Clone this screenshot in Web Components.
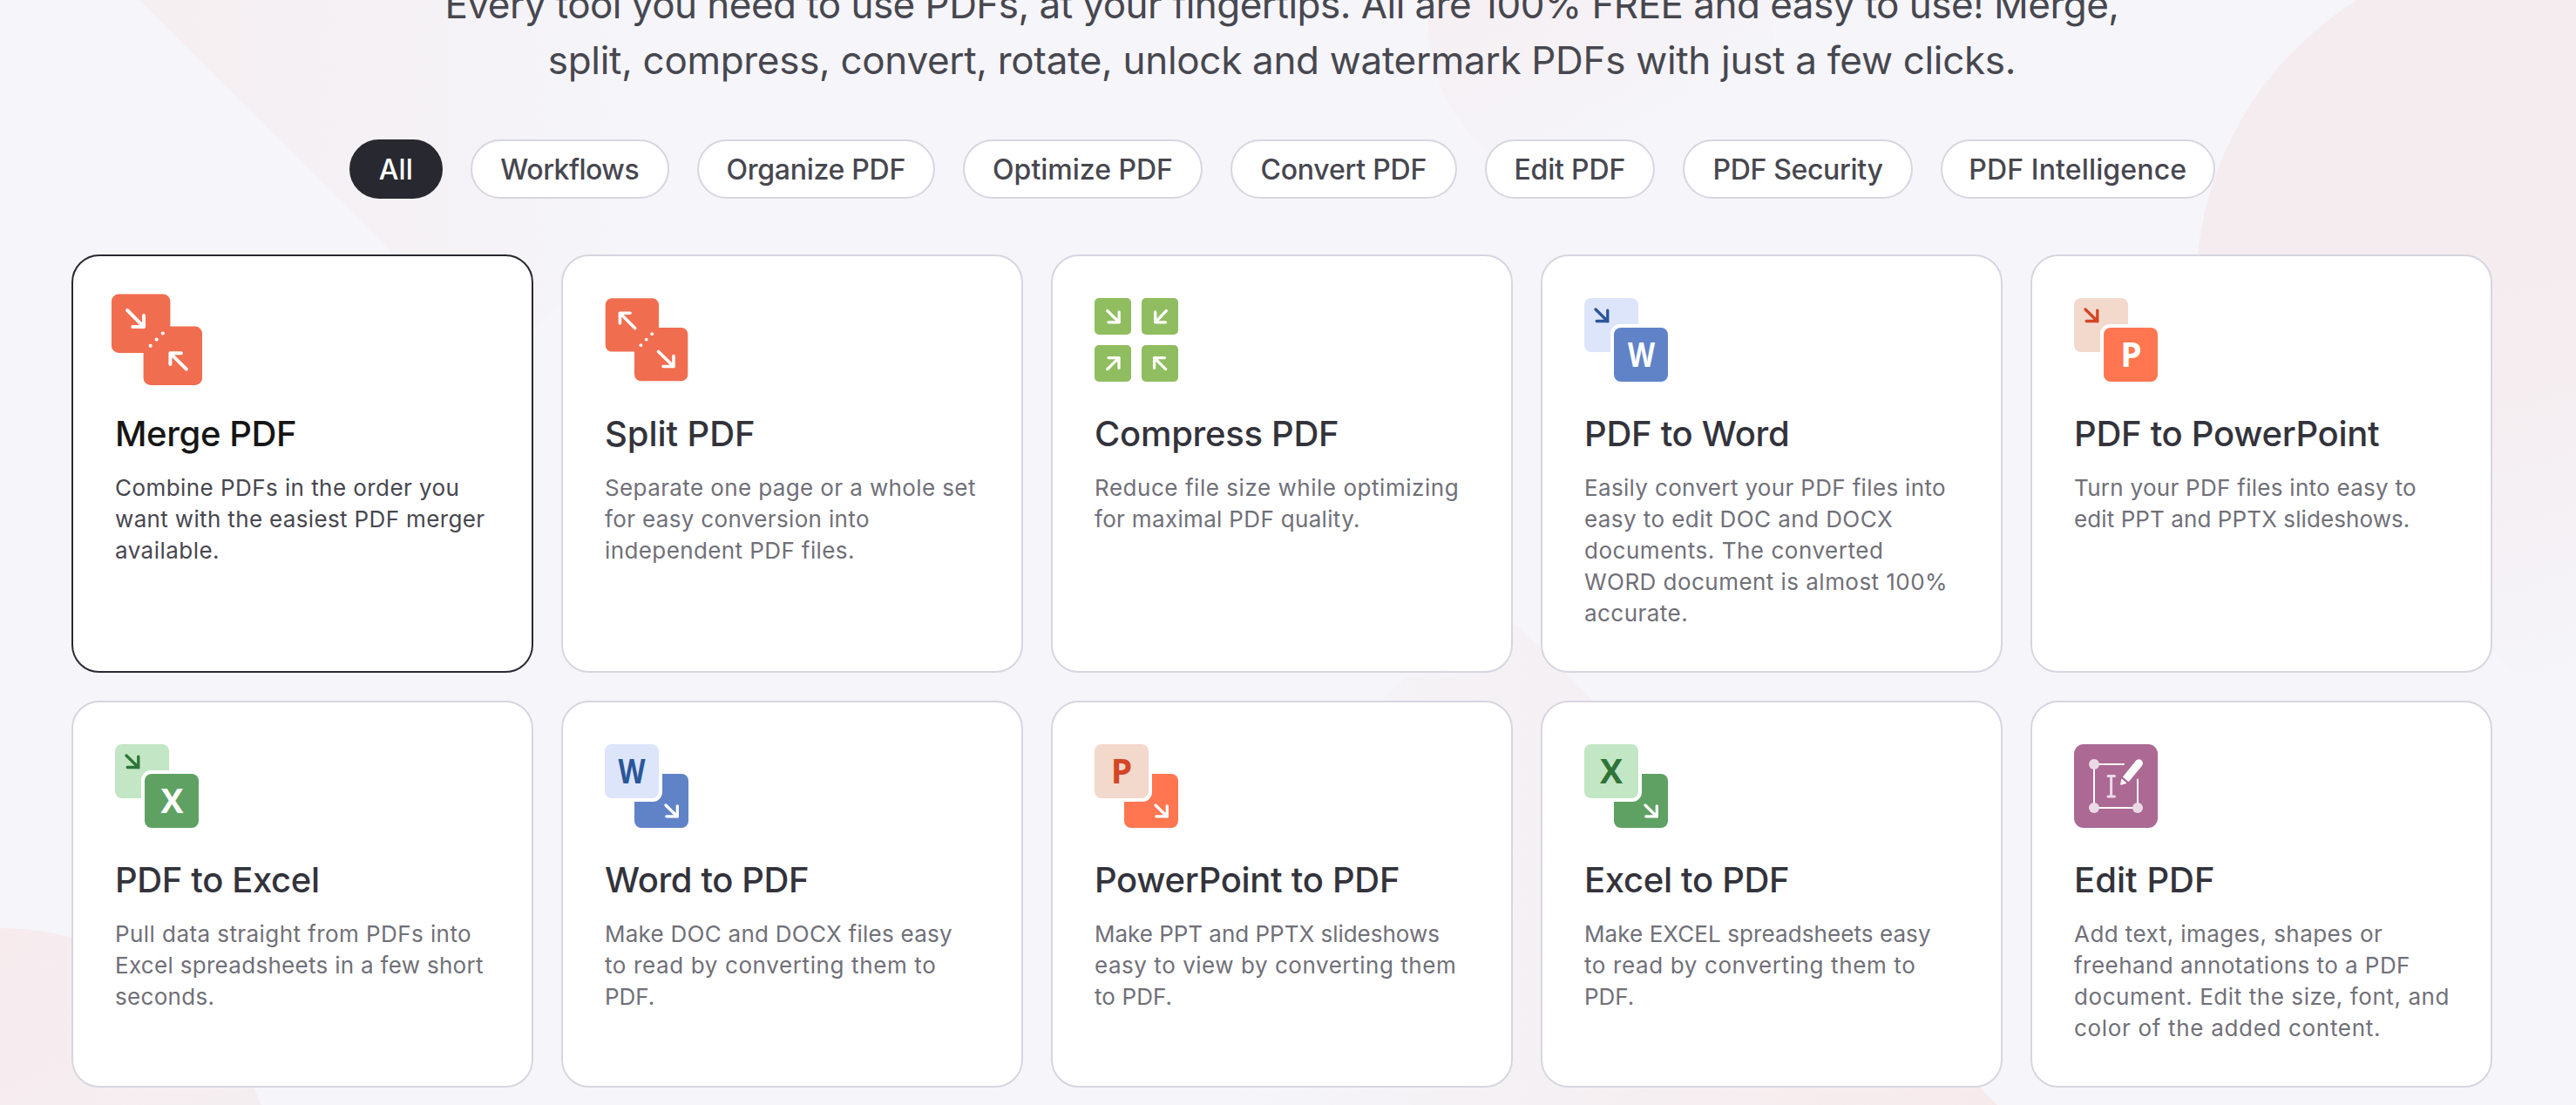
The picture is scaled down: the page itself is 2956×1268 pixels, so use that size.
<!DOCTYPE html>
<html lang="en">
<head>
<meta charset="utf-8">
<title>PDF tools</title>
<style>
    :root {
        --font-main: Inter, "Liberation Sans", sans-serif;
        --color-bg: #f5f5fa;
        --color-border: #d6d6e0;
        --color-title: #33333b;
        --color-text: #707078;
        --color-text-strong: #47474f;
        --color-dark: #282930;
    }
    body {
        margin: 0;
        height: 1268px;
        overflow: hidden;
        background: var(--color-bg);
        font-family: var(--font-main);
    }
</style>
</head>
<body>
<pdf-home></pdf-home>

<script>
// Texts are kept line by line: [text, letter-spacing in px]
const SUBTITLE = [
    ['Every tool you need to use PDFs, at your fingertips. All are 100% FREE and easy to use! Merge,', -0.53],
    ['split, compress, convert, rotate, unlock and watermark PDFs with just a few clicks.', -0.31]
];

const FILTERS = [
    { label: 'All', width: 107.5, spacing: 0.13, active: true },
    { label: 'Workflows', width: 227.5, spacing: -0.51 },
    { label: 'Organize PDF', width: 273.5, spacing: -0.27 },
    { label: 'Optimize PDF', width: 275, spacing: -0.01 },
    { label: 'Convert PDF', width: 259.5, spacing: -0.21 },
    { label: 'Edit PDF', width: 195.5, spacing: -0.17 },
    { label: 'PDF Security', width: 264, spacing: -0.33 },
    { label: 'PDF Intelligence', width: 314.5, spacing: 0.14 }
];

const TOOLS = [
    { icon: 'merge', title: ['Merge PDF', -0.4], active: true, lines: [
        ['Combine PDFs in the order you', 0.44],
        ['want with the easiest PDF merger', 0.35],
        ['available.', 0.46]] },
    { icon: 'split', title: ['Split PDF', -0.07], lines: [
        ['Separate one page or a whole set', 0.39],
        ['for easy conversion into', 0.35],
        ['independent PDF files.', 0.4]] },
    { icon: 'compress', title: ['Compress PDF', -0.29], lines: [
        ['Reduce file size while optimizing', 0.54],
        ['for maximal PDF quality.', 0.33]] },
    { icon: 'pdf-word', title: ['PDF to Word', -0.28], lines: [
        ['Easily convert your PDF files into', 0.34],
        ['easy to edit DOC and DOCX', 0.43],
        ['documents. The converted', 0.53],
        ['WORD document is almost 100%', 0.46],
        ['accurate.', 0.46]] },
    { icon: 'pdf-ppt', title: ['PDF to PowerPoint', -0.28], lines: [
        ['Turn your PDF files into easy to', 0.28],
        ['edit PPT and PPTX slideshows.', 0.09]] },
    { icon: 'pdf-excel', title: ['PDF to Excel', -0.36], lines: [
        ['Pull data straight from PDFs into', 0.43],
        ['Excel spreadsheets in a few short', 0.3],
        ['seconds.', 0.3]] },
    { icon: 'word-pdf', title: ['Word to PDF', -0.39], lines: [
        ['Make DOC and DOCX files easy', 0.26],
        ['to read by converting them to', 0.62],
        ['PDF.', 0]] },
    { icon: 'ppt-pdf', title: ['PowerPoint to PDF', -0.29], lines: [
        ['Make PPT and PPTX slideshows', -0.02],
        ['easy to view by converting them', 0.54],
        ['to PDF.', 0.1]] },
    { icon: 'excel-pdf', title: ['Excel to PDF', -0.31], lines: [
        ['Make EXCEL spreadsheets easy', 0.08],
        ['to read by converting them to', 0.62],
        ['PDF.', 0]] },
    { icon: 'edit', title: ['Edit PDF', 0.04], lines: [
        ['Add text, images, shapes or', 0.44],
        ['freehand annotations to a PDF', 0.46],
        ['document. Edit the size, font, and', 0.58],
        ['color of the added content.', 0.68]] }
];

const OFFICE = {
    word: { letter: 'W', light: '#dde5fa', main: '#6083c8', dark: '#2a5698', size: 31 },
    ppt: { letter: 'P', light: '#f3d8cc', main: '#ff7651', dark: '#d24625', size: 24.5 },
    excel: { letter: 'X', light: '#c3e6c4', main: '#5fa163', dark: '#2f7438', size: 26 }
};

function letter(app, x, y, fill) {
    const { letter, size } = OFFICE[app];
    return `<text x="${x - size / 2}" y="${y}" textLength="${size}" lengthAdjust="spacingAndGlyphs" fill="${fill}">${letter}</text>`;
}

function fromPdf(app) {
    const c = OFFICE[app];
    return `
        <rect width="62" height="62" rx="8" fill="${c.light}"/>
        <path d="M13 13 27 26.8M14.2 26.5H26.8V14.2" fill="none" stroke="${c.dark}" stroke-width="3.3"/>
        <rect x="30" y="30" width="70" height="70" rx="11" fill="#fff"/>
        <rect x="34" y="34" width="62" height="62" rx="8" fill="${c.main}"/>
        ${letter(app, 65.5, 79.3, '#fff')}`;
}

function toPdf(app) {
    const c = OFFICE[app];
    return `
        <rect x="34" y="34" width="62" height="62" rx="8" fill="${c.main}"/>
        <path d="M70 70 83.3 83M70.8 82.8H83.3V71" fill="none" stroke="#fff" stroke-width="3.3"/>
        <rect x="-4" y="-4" width="70" height="70" rx="11" fill="#fff"/>
        <rect width="62" height="62" rx="8" fill="${c.light}"/>
        ${letter(app, 31, 45.2, c.dark)}`;
}

const pages = `
    <rect x=".7" y=".3" width="61.3" height="61.3" rx="7.5" fill="#f06d4f"/>
    <rect x="34" y="34" width="61.3" height="61.3" rx="7.5" fill="#f06d4f"/>
    <g fill="#fff"><circle cx="54.2" cy="41.2" r="1.9"/><circle cx="47.7" cy="47.6" r="1.9"/><circle cx="41.3" cy="54.2" r="1.9"/></g>`;

const ICONS = {
    'merge': `${pages}<path d="M17.2 17.1 34.4 34.4M22.8 34.4H34.4V22.6M78.8 78.6 62 61.9M73.4 61.9H62V73.4" fill="none" stroke="#fff" stroke-width="3.6"/>`,
    'split': `${pages}<path d="M34.6 34.6 17.4 17.3M29 17.3H17.4V29M61.6 61.5 79 78.5M67 78.5H79V66.6" fill="none" stroke="#fff" stroke-width="3.6"/>`,
    'compress': `
        <g fill="#90bd60"><rect width="42" height="42" rx="5"/><rect x="54" width="42" height="42" rx="5"/><rect y="54" width="42" height="42" rx="5"/><rect x="54" y="54" width="42" height="42" rx="5"/></g>
        <path d="M14.8 14.6 28.2 27.8M16 27.8H28.2V16M82.3 14.6 69.7 27.8M81.5 27.8H69.7V16M14.8 81.6 28 68.6M16 68.6H28V80.4M81.6 81.6 68.6 68.6M80.4 68.6H68.6V80.4" fill="none" stroke="#fff" stroke-width="3.3"/>`,
    'pdf-word': fromPdf('word'),
    'pdf-ppt': fromPdf('ppt'),
    'pdf-excel': fromPdf('excel'),
    'word-pdf': toPdf('word'),
    'ppt-pdf': toPdf('ppt'),
    'excel-pdf': toPdf('excel'),
    'edit': `
        <rect width="96" height="96" rx="11" fill="#ab6993"/>
        <path d="M23 23H57M23 23V73H73V40.5" fill="none" stroke="#fff" stroke-width="2" stroke-linecap="butt"/>
        <g fill="#ebdae5"><circle cx="23" cy="23" r="6"/><circle cx="23" cy="73" r="6"/><circle cx="73" cy="73" r="6"/></g>
        <path d="M39 36.5H46.5M39 60H46.5M42.6 36.5V60" fill="none" stroke="#ebdae5" stroke-width="3"/>
        <path d="M55.9 37.6 70.6 19.2A4.6 4.6 0 0 1 78 24.8L62.6 43.2Z" fill="#fff"/>
        <path d="M55 40.4 60 44.6 54 46.2Z" fill="#fff" stroke="#fff" stroke-width="1"/>`
};

// tool-icon.js
class ToolIcon extends HTMLElement {
    constructor() {
        super();
        this.attachShadow({ mode: 'open' });
    }

    connectedCallback() {
        this.shadowRoot.innerHTML = /*html*/`
        <style>
            :host { display: block; width: 96px; height: 96px; }
            svg { display: block; width: 96px; height: 96px; overflow: visible; }
            path { stroke-linecap: round; stroke-linejoin: round; }
            text { font: 700 39px "Open Sans", sans-serif; }
        </style>
        <svg viewBox="0 0 96 96">${ICONS[this.getAttribute('name')] || ''}</svg>`;
    }
}
customElements.define('tool-icon', ToolIcon);

// tool-card.js
class ToolCard extends HTMLElement {
    constructor() {
        super();
        this.attachShadow({ mode: 'open' });
        this.shadowRoot.innerHTML = /*html*/`
        <style>
            :host {
                display: flex;
                flex-direction: column;
                box-sizing: border-box;
                padding: 48px;
                border: 2px solid var(--color-border);
                border-radius: 32px;
                background: #fff;
                color: var(--color-text);
            }
            :host([active]) {
                border-color: var(--color-dark);
                color: var(--color-text-strong);
            }
            :host([active]) ::slotted(tool-icon) { transform: scale(1.1); }
            :host([active]) h3 { color: #161616; }
            h3 {
                margin: 36px 0 20px;
                color: var(--color-title);
                font-size: 40px;
                line-height: 48px;
                font-weight: 500;
                white-space: nowrap;
            }
            p {
                margin: 0;
                font-size: 26px;
                line-height: 36px;
                white-space: nowrap;
            }
        </style>
        <slot name="icon"></slot>
        <h3><slot name="title"></slot></h3>
        <p><slot></slot></p>`;
    }
}
customElements.define('tool-card', ToolCard);

// filter-chip.js
class FilterChip extends HTMLElement {
    constructor() {
        super();
        this.attachShadow({ mode: 'open' });
        this.shadowRoot.innerHTML = /*html*/`
        <style>
            :host {
                display: flex;
                align-items: center;
                justify-content: center;
                box-sizing: border-box;
                height: 68px;
                border: 2px solid var(--color-border);
                border-radius: 34px;
                background: #fff;
                color: var(--color-text-strong);
                font-size: 32px;
                font-weight: 500;
                white-space: nowrap;
            }
            :host([active]) {
                border-color: var(--color-dark);
                background: var(--color-dark);
                color: #fff;
            }
        </style>
        <slot></slot>`;
    }
}
customElements.define('filter-chip', FilterChip);

// page-backdrop.js
class PageBackdrop extends HTMLElement {
    constructor() {
        super();
        this.attachShadow({ mode: 'open' });
        this.shadowRoot.innerHTML = /*html*/`
        <style>
            :host { display: block; position: absolute; inset: 0; z-index: -1; }
            svg { display: block; width: 100%; height: 100%; }
        </style>
        <svg viewBox="0 0 2956 1268" preserveAspectRatio="none">
            <defs>
                <linearGradient id="a" gradientUnits="userSpaceOnUse" x1="180" y1="100" x2="740" y2="100">
                    <stop offset="0" stop-color="#f6eff2"/><stop offset=".4" stop-color="#f5f1f4"/><stop offset="1" stop-color="#f5f5fa"/>
                </linearGradient>
                <linearGradient id="b" gradientUnits="userSpaceOnUse" x1="1690" y1="-80" x2="1830" y2="190">
                    <stop offset="0" stop-color="#f6eef1"/><stop offset="1" stop-color="#f5f5fa"/>
                </linearGradient>
                <linearGradient id="c" gradientUnits="userSpaceOnUse" x1="2760" y1="250" x2="2900" y2="800">
                    <stop offset="0" stop-color="#f5ecef"/><stop offset=".35" stop-color="#f5edf0"/><stop offset="1" stop-color="#f5f5fa"/>
                </linearGradient>
                <linearGradient id="d" gradientUnits="userSpaceOnUse" x1="1420" y1="0" x2="2290" y2="0">
                    <stop offset="0" stop-color="#f5f5fa"/><stop offset=".35" stop-color="#f5f1f4"/><stop offset="1" stop-color="#f7eaec"/>
                </linearGradient>
                <linearGradient id="e" gradientUnits="userSpaceOnUse" x1="0" y1="1065" x2="160" y2="1330">
                    <stop offset="0" stop-color="#f7ebee"/><stop offset="1" stop-color="#f5eef1"/>
                </linearGradient>
            </defs>
            <path d="M160 0 575 415 990 0Z" fill="url(#a)"/>
            <circle cx="1837" cy="25" r="198" fill="url(#b)"/>
            <path d="M2705 0A390 390 0 0 0 2520 331Q2560 560 2800 680L2956 850V0Z" fill="url(#c)"/>
            <path d="M1122 1268 1667 723Q1707 690 1747 723L2292 1268Z" fill="url(#d)"/>
            <circle cx="0" cy="1388" r="323" fill="url(#e)"/>
        </svg>`;
    }
}
customElements.define('page-backdrop', PageBackdrop);

// pdf-home.js
class PdfHome extends HTMLElement {
    constructor() {
        super();
        this.attachShadow({ mode: 'open' });
        this._render();
    }

    _line([text, spacing]) {
        return `<span class="line" style="letter-spacing:${spacing}px">${text}</span>`;
    }

    _chip(f) {
        return `<filter-chip ${f.active ? 'active' : ''} style="width:${f.width}px;letter-spacing:${f.spacing}px">${f.label}</filter-chip>`;
    }

    _card(t) {
        return `
        <tool-card ${t.active ? 'active' : ''}>
            <tool-icon slot="icon" name="${t.icon}"></tool-icon>
            <span slot="title" style="letter-spacing:${t.title[1]}px">${t.title[0]}</span>
            ${t.lines.map(this._line).join('')}
        </tool-card>`;
    }

    _render() {
        this.shadowRoot.innerHTML = /*html*/`
        <style>
            :host {
                display: block;
                position: relative;
                z-index: 0;
                height: 1268px;
                overflow: hidden;
            }
            main {
                display: flex;
                flex-direction: column;
                width: 2942px;
            }
            .line { display: block; }
            .subtitle {
                display: flex;
                flex-direction: column;
                justify-content: flex-end;
                height: 101px;
                margin: 0 0 59px;
                color: var(--color-text-strong);
                font-size: 44px;
                line-height: 64px;
                text-align: center;
                white-space: nowrap;
            }
            nav {
                display: flex;
                justify-content: center;
                gap: 32px;
                margin-bottom: 64px;
            }
            .tools {
                display: grid;
                grid-template-columns: repeat(5, minmax(0, 1fr));
                gap: 32px;
                padding: 0 82px;
            }
        </style>
        <page-backdrop></page-backdrop>
        <main>
            <p class="subtitle">${SUBTITLE.map(this._line).join('')}</p>
            <nav>${FILTERS.map(this._chip).join('')}</nav>
            <section class="tools">${TOOLS.map(t => this._card(t)).join('')}</section>
        </main>`;
    }
}
customElements.define('pdf-home', PdfHome);
</script>
</body>
</html>
